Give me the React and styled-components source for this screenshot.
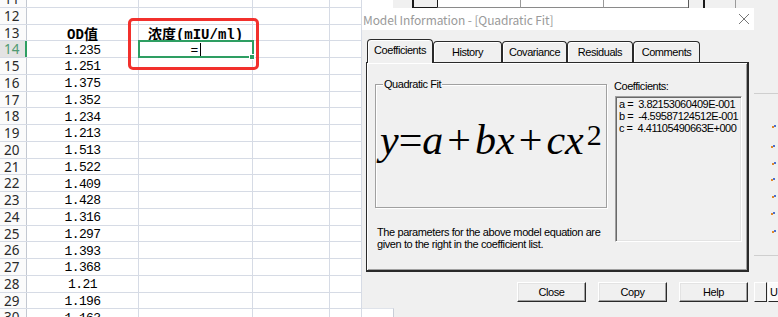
import React from 'react'
import styled, { createGlobalStyle, css } from 'styled-components'

const GlobalStyle = createGlobalStyle`
  html, body { margin: 0; padding: 0; background: #fff; }
  body { font-family: "Liberation Sans", Arial, sans-serif; }
`

const Screen = styled.div`
  width: 778px;
  height: 317px;
  display: flex;
  overflow: hidden;
  background: #fff;
`

/* ---------- spreadsheet ---------- */

const Sheet = styled.div`
  position: relative;
  width: 362px;
  flex: none;
  overflow: hidden;
`

const Grid = styled.div`
  margin-top: -9px;
`

const Row = styled.div`
  display: flex;
  height: 16.75px;
  box-sizing: border-box;
  border-bottom: 1px solid #d6dbe5;
`

const RowHead = styled.div`
  width: 27px;
  flex: none;
  box-sizing: border-box;
  padding-left: 4px;
  border-right: ${p => (p.$active ? '2px solid #2e9e62' : '1px solid #c3c8d1')};
  background: ${p => (p.$active ? '#e3e3e3' : '#fbfbfb')};
  color: ${p => (p.$active ? '#4f9a72' : '#2a2a2a')};
  font: 13.5px/16px "Noto Sans", "DejaVu Sans", sans-serif;
`

const Cell = styled.div`
  position: relative;
  width: ${p => (p.$w ? `${p.$w}px` : 'auto')};
  flex: ${p => (p.$w ? 'none' : '1')};
  box-sizing: border-box;
  border-right: 1px solid #d6dbe5;
  display: flex;
  align-items: center;
  justify-content: center;
  padding-top: 2px;
  font-family: "Liberation Mono", "Noto Sans CJK SC", monospace;
  font-size: 13px;
  letter-spacing: -0.6px;
  color: #000;
  ${p => p.$head && css`
    font-size: 14px;
    font-weight: bold;
    letter-spacing: 0;
  `}
  ${p => p.$selected && css`
    &::after {
      content: '';
      position: absolute;
      left: -1px;
      top: -1px;
      right: -2px;
      bottom: -1px;
      border: 2px solid #2e9e62;
    }
    &::before {
      content: '';
      position: absolute;
      right: -3px;
      bottom: -3px;
      width: 4px;
      height: 4px;
      background: #2e9e62;
      border: 1px solid #fff;
      z-index: 1;
    }
  `}
`

const Caret = styled.span`
  display: inline-block;
  width: 1px;
  height: 14px;
  margin-left: 2px;
  background: #000;
`

const Annotation = styled.div`
  position: absolute;
  left: 128px;
  top: 18px;
  width: 131px;
  height: 52px;
  box-sizing: border-box;
  border: 3px solid #f2302c;
  border-radius: 5px;
  pointer-events: none;
`

/* ---------- desktop behind / dialog ---------- */

const Desk = styled.div`
  flex: 1;
  display: flex;
  flex-direction: column;
  background: #f0f0f0;
`

const BackStrip = styled.div`
  height: 8px;
  flex: none;
  display: flex;
`

const StripPart = styled.div`
  width: ${p => p.$w}px;
  flex: ${p => (p.$w ? 'none' : '1')};
  box-sizing: border-box;
  background: ${p => p.$bg || '#f0f0f0'};
  border-left: ${p => p.$line || 'none'};
  border-bottom: ${p => p.$under || 'none'};
`

const Middle = styled.div`
  height: 300px;
  flex: none;
  display: flex;
`

const Dialog = styled.div`
  width: 392px;
  flex: none;
  display: flex;
  flex-direction: column;
  background: #f0f0f0;
`

const TitleBar = styled.div`
  height: 22px;
  flex: none;
  display: flex;
  align-items: center;
  justify-content: space-between;
  padding: 0 4px 0 1px;
  background: #fff;
`

const Title = styled.span`
  font: 12px "Noto Sans CJK SC", "Noto Sans", sans-serif;
  letter-spacing: -0.1px;
  color: #9a9a9a;
`

const Body = styled.div`
  padding: 9px 5px 0 4px;
  display: flex;
  flex-direction: column;
`

const TabRow = styled.div`
  display: flex;
  align-items: flex-end;
  height: 23px;
  padding-left: 1px;
`

const Tab = styled.div`
  position: relative;
  width: ${p => p.$w}px;
  height: ${p => (p.$active ? 24 : 21)}px;
  margin-bottom: ${p => (p.$active ? -1 : 0)}px;
  z-index: ${p => (p.$active ? 1 : 0)};
  box-sizing: border-box;
  display: flex;
  align-items: center;
  justify-content: center;
  padding-bottom: ${p => (p.$active ? 3 : 1)}px;
  border: 1px solid #2a2a2a;
  border-bottom: none;
  border-radius: 4px 4px 0 0;
  box-shadow: inset 1px 1px 0 #fff;
  background: #f0f0f0;
  font-size: 11px;
  letter-spacing: -0.45px;
  color: #000;
`

const Pane = styled.div`
  height: 210px;
  box-sizing: border-box;
  display: flex;
  gap: 8px;
  padding: 17px 5px 0 8px;
  border: 1px solid #2a2a2a;
  border-right-width: 2px;
  border-bottom-width: 2px;
  box-shadow: inset 1px 1px 0 #fff, inset -1px -1px 0 #a0a0a0;
`

const LeftCol = styled.div`
  width: 232px;
  flex: none;
  padding-top: 4px;
`

const GroupBox = styled.div`
  position: relative;
  height: 124px;
  box-sizing: border-box;
  border: 1px solid #a0a0a0;
  box-shadow: inset 1px 1px 0 #fff, 1px 1px 0 #fff;
  padding: 34px 0 0 4px;
`

const GroupLabel = styled.span`
  position: absolute;
  left: 7px;
  top: -7px;
  padding: 0 1px;
  background: #f0f0f0;
  font-size: 11px;
  line-height: 12px;
  letter-spacing: -0.45px;
`

const Equation = styled.div`
  font-family: "Liberation Serif", "Times New Roman", serif;
  font-size: 42px;
  line-height: 42px;
  white-space: nowrap;
  color: #000;
`

const Var = styled.i`
  font-style: italic;
`

const Op = styled.span`
  margin: 0 ${p => (p.$spaced ? 4 : 0)}px;
`

const Sup = styled.span`
  font-size: 30px;
  line-height: 0;
  vertical-align: 9px;
  margin-left: 3px;
`

const Note = styled.p`
  margin: 18px 0 0 2px;
  font-size: 11px;
  line-height: 12px;
  letter-spacing: -0.4px;
  color: #000;
`

const RightCol = styled.div`
  width: 127px;
  flex: none;
`

const ListLabel = styled.div`
  font-size: 11px;
  line-height: 12px;
  letter-spacing: -0.45px;
  margin-left: -1px;
`

const ListBox = styled.div`
  margin-top: 4px;
  height: 146px;
  box-sizing: border-box;
  padding: 0 2px;
  border: 1px solid;
  border-color: #a0a0a0 #fff #fff #a0a0a0;
  box-shadow: inset 1px 1px 0 #696969, inset -1px -1px 0 #e3e3e3;
  background: #f0f0f0;
`

const ListLine = styled.div`
  font-size: 11px;
  line-height: 12px;
  letter-spacing: -0.5px;
  white-space: pre;
  padding-left: 1px;
  &:first-child { margin-top: 1px; }
`

const ButtonRow = styled.div`
  display: flex;
  justify-content: flex-end;
  gap: 12px;
  margin-top: 10px;
  padding-right: 1px;
`

const Button = styled.div`
  width: 69px;
  height: 20px;
  box-sizing: border-box;
  display: flex;
  align-items: center;
  justify-content: center;
  background: #f0f0f0;
  border: 1px solid;
  border-color: #fff #2a2a2a #2a2a2a #fff;
  box-shadow: inset -1px -1px 0 #a0a0a0, inset 1px 1px 0 #e3e3e3;
  font-size: 11px;
  letter-spacing: -0.4px;
  color: #000;
`

const SideWindow = styled.div`
  flex: 1;
  display: flex;
  flex-direction: column;
  background: #f0f0f0;
`

const SideTop = styled.div`
  height: 85px;
  flex: none;
`

const Plot = styled.div`
  height: 163px;
  flex: none;
  box-sizing: border-box;
  border-top: 1px solid #cfcfcf;
  border-bottom: 1px solid #cfcfcf;
`

const SideButtons = styled.div`
  display: flex;
  gap: 1px;
  margin-top: 26px;
  height: 20px;
`

const SideButton = styled.div`
  width: ${p => (p.$w ? `${p.$w}px` : 'auto')};
  flex: ${p => (p.$w ? 'none' : '1')};
  box-sizing: border-box;
  border: 1px solid;
  border-color: #fff #2a2a2a #2a2a2a #fff;
  background: ${p => p.$bg || '#f0f0f0'};
  font-size: 11px;
  line-height: 18px;
  padding-left: 1px;
`

const BottomStrip = styled.div`
  flex: 1;
  display: flex;
`

const SheetTab = styled.div`
  width: 32px;
  box-sizing: border-box;
  background: #fff;
  border-top: 1px solid #dfe3ea;
  border-right: 1px solid #c9ced8;
`

const values = [
  '1.235', '1.251', '1.375', '1.352', '1.234', '1.213', '1.513', '1.522',
  '1.409', '1.428', '1.316', '1.297', '1.393', '1.368', '1.21', '1.196', '1.163'
]

const tabs = [
  { label: 'Coefficients', w: 66, active: true },
  { label: 'History', w: 69 },
  { label: 'Covariance', w: 65 },
  { label: 'Residuals', w: 66 },
  { label: 'Comments', w: 67 }
]

const coefficients = [
  'a =  3.82153060409E-001',
  'b =  -4.59587124512E-001',
  'c =  4.41105490663E+000'
]

const dots = [32, 52, 69, 85, 102, 119, 137]

const CloseIcon = () => (
  <svg width="12" height="12" viewBox="0 0 12 12">
    <path d="M1 1 L11 11 M11 1 L1 11" stroke="#777" strokeWidth="1" fill="none" />
  </svg>
)

const rows = []
for (let n = 11; n <= 30; n++) rows.push(n)

const cellB = n => {
  if (n === 13) return 'OD值'
  if (n >= 14) return values[n - 14]
  return ''
}

const App = () => (
  <>
    <GlobalStyle />
    <Screen>
      <Sheet>
        <Grid>
          {rows.map(n => (
            <Row key={n}>
              <RowHead $active={n === 14}>{n}</RowHead>
              <Cell $w={112} $head={n === 13}>{cellB(n)}</Cell>
              <Cell $w={114} $head={n === 13} $selected={n === 14}>
                {n === 13 && '浓度(mIU/ml)'}
                {n === 14 && <>=<Caret /></>}
              </Cell>
              <Cell $w={77} />
              <Cell />
            </Row>
          ))}
        </Grid>
        <Annotation />
      </Sheet>

      <Desk>
        <BackStrip>
          <StripPart $w={31} $bg="#fff" />
          <StripPart $w={19} />
          <StripPart $w={25} $line="2px solid #1a1a1a" $under="1px solid #1a1a1a" />
          <StripPart $w={83} $bg="#fff" $line="1px solid #1a1a1a" $under="1px solid #8a8a8a" />
          <StripPart $w={83} $bg="#fff" $line="1px solid #9a9a9a" $under="1px solid #8a8a8a" />
          <StripPart $w={85} $bg="#fff" $line="1px solid #9a9a9a" $under="1px solid #8a8a8a" />
          <StripPart $w={15} $line="1px solid #5a5a5a" />
          <StripPart $w={32} $line="2px solid #1a1a1a" />
          <StripPart $line="1px solid #9a9a9a" />
        </BackStrip>

        <Middle>
          <Dialog>
            <TitleBar>
              <Title>Model Information - [Quadratic Fit]</Title>
              <CloseIcon />
            </TitleBar>
            <Body>
              <TabRow>
                {tabs.map(t => (
                  <Tab key={t.label} $w={t.w} $active={t.active}>{t.label}</Tab>
                ))}
              </TabRow>
              <Pane>
                <LeftCol>
                  <GroupBox>
                    <GroupLabel>Quadratic Fit</GroupLabel>
                    <Equation>
                      <Var>y</Var><Op>=</Op><Var>a</Var>
                      <Op $spaced>+</Op><Var>bx</Var>
                      <Op $spaced>+</Op><Var>cx</Var><Sup>2</Sup>
                    </Equation>
                  </GroupBox>
                  <Note>
                    The parameters for the above model equation are<br />
                    given to the right in the coefficient list.
                  </Note>
                </LeftCol>
                <RightCol>
                  <ListLabel>Coefficients:</ListLabel>
                  <ListBox>
                    {coefficients.map(c => <ListLine key={c}>{c}</ListLine>)}
                  </ListBox>
                </RightCol>
              </Pane>
              <ButtonRow>
                <Button>Close</Button>
                <Button>Copy</Button>
                <Button>Help</Button>
              </ButtonRow>
            </Body>
          </Dialog>

          <SideWindow>
            <SideTop />
            <Plot>
              <svg width="24" height="161" viewBox="0 0 24 161">
                {dots.map((y, i) => (
                  <g key={y}>
                    <rect x={18 - (i % 2)} y={y} width="2" height="2" fill="#e08a2a" />
                    <rect x={20 - (i % 2)} y={y - 1} width="2" height="2" fill="#4a6fd0" />
                  </g>
                ))}
              </svg>
            </Plot>
            <SideButtons>
              <SideButton $w={13} />
              <SideButton $bg="#fafafa">U</SideButton>
            </SideButtons>
          </SideWindow>
        </Middle>

        <BottomStrip>
          <SheetTab />
        </BottomStrip>
      </Desk>
    </Screen>
  </>
)

export default App
